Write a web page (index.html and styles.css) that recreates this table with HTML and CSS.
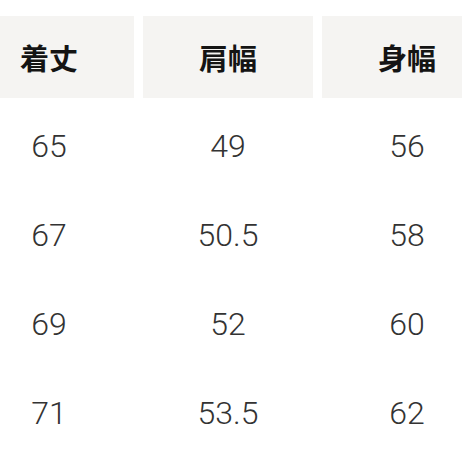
FILE: index.html
```html
<!DOCTYPE html>
<html lang="ja">
<head>
<meta charset="utf-8">
<link rel="stylesheet" href="styles.css">
</head>
<body>
<div class="viewport">
  <div class="table">
    <div class="head">着丈</div>
    <div class="head">肩幅</div>
    <div class="head">身幅</div>
    <div class="cell">65</div>
    <div class="cell">49</div>
    <div class="cell">56</div>
    <div class="cell">67</div>
    <div class="cell">50.5</div>
    <div class="cell">58</div>
    <div class="cell">69</div>
    <div class="cell">52</div>
    <div class="cell">60</div>
    <div class="cell">71</div>
    <div class="cell">53.5</div>
    <div class="cell">62</div>
  </div>
</div>
</body>
</html>
```
FILE: styles.css
```css
html, body {
  margin: 0;
  padding: 0;
  background: #ffffff;
}
.viewport {
  width: 462px;
  height: 462px;
  overflow: hidden;
}
.table {
  display: grid;
  grid-template-columns: repeat(3, 170px);
  grid-template-rows: 82px repeat(4, 80px);
  column-gap: 9px;
  row-gap: 9px;
  margin-left: -36px;
  padding-top: 16px;
  font-family: "Noto Sans CJK JP", "Noto Sans", sans-serif;
}
.head {
  background: #f5f4f2;
  display: flex;
  align-items: center;
  justify-content: center;
  font-size: 29px;
  font-weight: 700;
  color: #141414;
}
.cell {
  display: flex;
  align-items: center;
  justify-content: center;
  padding-bottom: 3px;
  font-family: Roboto, "Noto Sans", sans-serif;
  font-size: 32px;
  font-weight: 300;
  color: #333333;
}
```
